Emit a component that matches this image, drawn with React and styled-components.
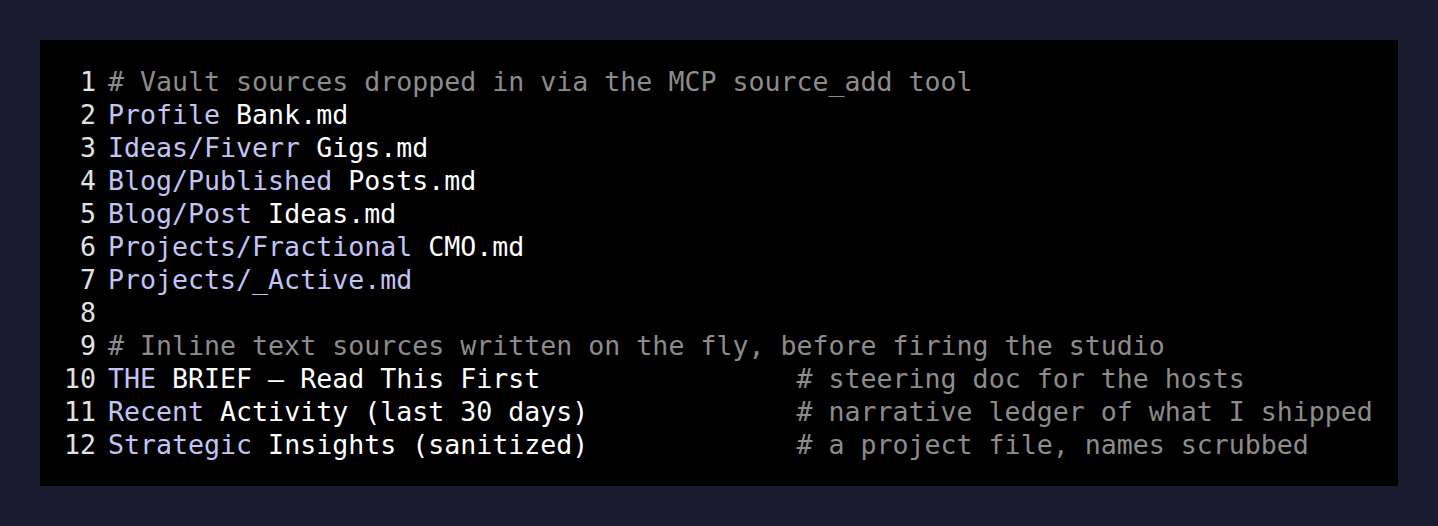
import React from 'react';
import styled, { createGlobalStyle } from 'styled-components';

const GlobalStyle = createGlobalStyle`
  html, body {
    margin: 0;
    padding: 0;
    background: #1b1b30;
  }
`;

const lines = [
  { comment: '# Vault sources dropped in via the MCP source_add tool' },
  { key: 'Profile', rest: 'Bank.md' },
  { key: 'Ideas/Fiverr', rest: 'Gigs.md' },
  { key: 'Blog/Published', rest: 'Posts.md' },
  { key: 'Blog/Post', rest: 'Ideas.md' },
  { key: 'Projects/Fractional', rest: 'CMO.md' },
  { key: 'Projects/_Active.md' },
  {},
  { comment: '# Inline text sources written on the fly, before firing the studio' },
  { key: 'THE', rest: 'BRIEF — Read This First', note: '# steering doc for the hosts' },
  { key: 'Recent', rest: 'Activity (last 30 days)', note: '# narrative ledger of what I shipped' },
  { key: 'Strategic', rest: 'Insights (sanitized)', note: '# a project file, names scrubbed' }
];

// comments on source lines line up at this column
const COLUMN = 43;

export default function App() {
  return (
    <>
      <GlobalStyle />
      <Page>
        <CodeBlock>
          {lines.map((line, i) => {
            const code = line.key ? `${line.key}${line.rest ? ` ${line.rest}` : ''}` : '';
            const pad = line.note ? ' '.repeat(Math.max(1, COLUMN - code.length)) : '';
            return (
              <Line key={i}>
                <LineNo>{i + 1}</LineNo>
                <Code>
                  {line.comment && <Comment>{line.comment}</Comment>}
                  {line.key && <Key>{line.key}</Key>}
                  {line.rest && <Plain>{` ${line.rest}`}</Plain>}
                  {line.note && <Comment>{pad}{line.note}</Comment>}
                </Code>
              </Line>
            );
          })}
        </CodeBlock>
      </Page>
    </>
  );
}

const Page = styled.div`
  padding: 40px;
  min-height: 446px;
`;

const CodeBlock = styled.pre`
  margin: 0;
  background: #000;
  padding: 25px 0 25px 0;
  font-family: 'DejaVu Sans Mono', monospace;
  font-size: 26.6px;
  line-height: 33px;
  color: #fff;
`;

const Line = styled.div`
  display: flex;
  height: 33px;
`;

const LineNo = styled.span`
  width: 56px;
  text-align: right;
  color: #e2e2e2;
  padding-right: 12px;
  flex: none;
`;

const Code = styled.span`
  white-space: pre;
`;

const Key = styled.span`
  color: #c3c3f6;
`;

const Plain = styled.span`
  color: #fff;
`;

const Comment = styled.span`
  color: #8c8c8c;
`;
